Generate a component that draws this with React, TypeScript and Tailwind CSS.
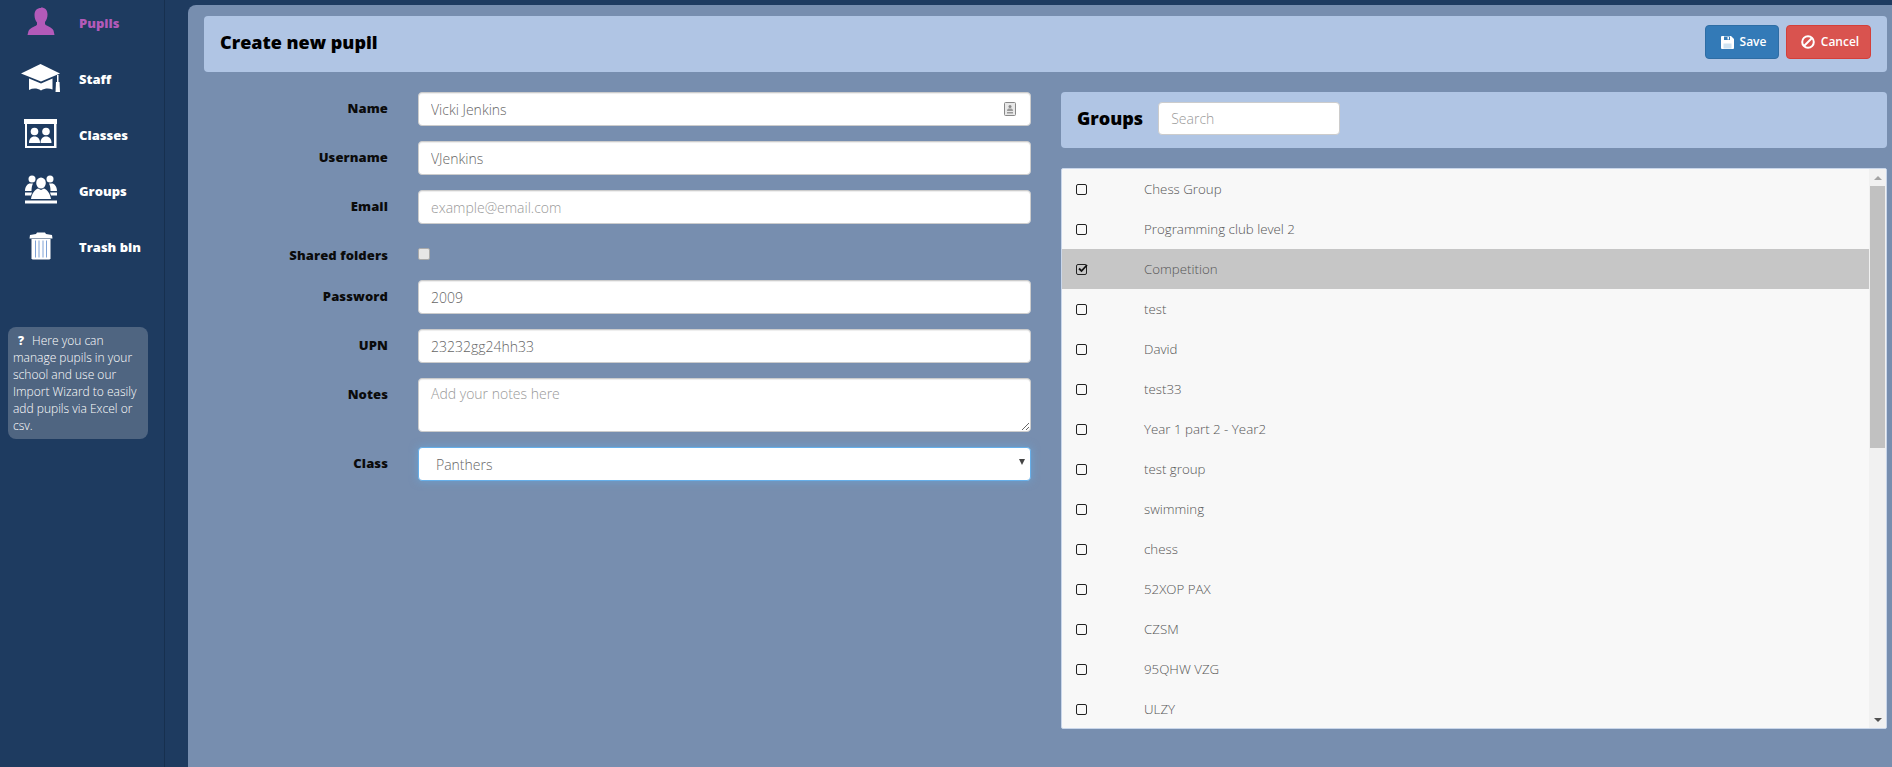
const openSans = "font-['Open_Sans',sans-serif]";

function PupilIcon() {
  return (
    <svg width="28" height="30" viewBox="0 0 28 30" fill="#b35ab9">
      <path d="M14 1c-4 0-6.500 2.500-6.500 7 0 3 1 6 2.500 7.500v2c0 1.500-7 3-8.500 6.500L.5 28h27l-1-4.500c-1.500-3.500-8.500-5-8.500-6.500v-2c1.500-1.500 2.500-4.500 2.500-7.500 0-4.500-2.500-7-6.500-7z" />
    </svg>
  );
}

function StaffIcon() {
  return (
    <svg width="42" height="30" viewBox="0 0 42 30" fill="white">
      <path d="M20.500 1 1 10.500l20 8 19-8z" />
      <path d="M9 15.500v11.500c4-2 8-2 12 0.500 4-2.500 8-2.500 11.500-1V15.500l-11.500 5z" />
      <rect x="37" y="12" width="1.500" height="7" />
      <path d="M36 19h3.500l.5 10h-4.500z" />
    </svg>
  );
}

function ClassesIcon() {
  return (
    <svg width="34" height="29" viewBox="0 0 34 29" fill="white">
      <rect x="0" y="0" width="33" height="5" />
      <path d="M1 5h2v24H1zM30 5h2.500v24H1v-2h29z" />
      <circle cx="10.500" cy="12.500" r="3.800" />
      <path d="M5 24c0-4 2-6.500 5.500-6.500S16 20 16 24z" />
      <circle cx="22" cy="12.500" r="3.800" />
      <path d="M16.500 24c0-4 2-6.500 5.500-6.500s5.500 2.500 5.500 6.500z" />
    </svg>
  );
}

function GroupsIcon() {
  return (
    <svg width="32" height="29" viewBox="0 0 32 29" fill="white">
      <circle cx="7" cy="4" r="3.500" />
      <circle cx="25" cy="4" r="3.500" />
      <path d="M0 16c0-5 3-7.500 5-7.500h3c-1 2-1.500 4-1.500 7.500zM32 16c0-5-3-7.500-5-7.500h-3c1 2 1.500 4 1.500 7.500zM0 17.500h7L6 20.500H0zM32 17.500h-7l1 3h6z" />
      <ellipse cx="16" cy="8" rx="4.800" ry="5.500" />
      <path d="M6 24c1-6 4-9.500 7-10.500l3 1.500 3-1.500c3 1 6 4.500 7 10.500z" />
      <rect x="0" y="25.500" width="32" height="3" />
    </svg>
  );
}

function TrashIcon() {
  return (
    <svg width="26" height="29" viewBox="0 0 26 29">
      <path d="M9 1.500h8l1 1.500 6 1 .5 3.500H1.500L2 4l6-1z" fill="white" />
      <path d="M3.500 8h19v19.500l-1 1h-17l-1-1z" fill="white" />
      <path d="M7.500 9.500v17M11 9.500v17M15 9.500v17M18.500 9.500v17" stroke="#7ea2d6" strokeWidth="1" />
    </svg>
  );
}

function FloppyIcon() {
  return (
    <svg width="13" height="13" viewBox="0 0 13 13">
      <path d="M0 1a1 1 0 0 1 1-1h9l3 3v9a1 1 0 0 1-1 1H1a1 1 0 0 1-1-1z" fill="white" />
      <rect x="3" y="0.500" width="6" height="3.500" fill="#337ab7" />
      <rect x="6.500" y="1" width="1.500" height="2.500" fill="white" />
      <rect x="2.500" y="7.500" width="8" height="5" fill="#cfe3f2" />
    </svg>
  );
}

function BanIcon() {
  return (
    <svg width="14" height="14" viewBox="0 0 14 14" fill="none" stroke="white" strokeWidth="2">
      <circle cx="7" cy="7" r="5.800" />
      <path d="M3 11 11 3" />
    </svg>
  );
}

const navItems = [
  { label: "Pupils", icon: PupilIcon, active: true },
  { label: "Staff", icon: StaffIcon, active: false },
  { label: "Classes", icon: ClassesIcon, active: false },
  { label: "Groups", icon: GroupsIcon, active: false },
  { label: "Trash bin", icon: TrashIcon, active: false },
];

const groups = [
  "Chess Group",
  "Programming club level 2",
  "Competition",
  "test",
  "David",
  "test33",
  "Year 1 part 2 - Year2",
  "test group",
  "swimming",
  "chess",
  "52XOP PAX",
  "CZSM",
  "95QHW VZG",
  "ULZY",
];

function Sidebar() {
  return (
    <aside className="w-[165px] shrink-0 border-r border-[#17304f]">
      <nav className="-mt-[4px] flex flex-col">
        {navItems.map((item) => (
          <div key={item.label} className="flex h-[56px] items-center">
            <div className="flex w-[79px] shrink-0 justify-center pb-[5px] pl-[3px]">
              <item.icon />
            </div>
            <span
              className={`text-[13px] font-extrabold ${item.active ? "text-[#b35ab9]" : "text-white"}`}
            >
              {item.label}
            </span>
          </div>
        ))}
      </nav>
      <div className="ml-[8px] mt-[51px] h-[112px] w-[140px] rounded-lg bg-[#4f6581] px-[5px] py-[5px] text-[12px] font-light leading-[17px] text-white">
        <span className="ml-[5px] mr-[8px] font-extrabold">?</span>
        <span>Here you can</span>{" "}
        <span>manage pupils in your school and use our Import Wizard to easily add pupils via Excel or csv.</span>
      </div>
    </aside>
  );
}

const labelClass =
  "w-[184px] shrink-0 pt-[7px] text-right text-[13px] font-extrabold leading-[18px] tracking-[0.1px] text-[#0b0b0b]";

function Field({ label, children }: { label: string; children: React.ReactNode }) {
  return (
    <div className="flex items-start">
      <label className={labelClass}>{label}</label>
      <div className="ml-[30px] flex-1">{children}</div>
    </div>
  );
}

const inputClass =
  "block h-[34px] w-full rounded border border-[#ccc] bg-white px-[12px] text-[14px] font-light text-[#666] shadow-[inset_0_1px_1px_rgba(0,0,0,0.075)] outline-none placeholder:text-[#999]";

function PupilForm() {
  return (
    <div className="w-[827px] shrink-0 pt-[20px]">
      <div className="flex flex-col gap-[15px]">
        <Field label="Name">
          <div className="relative">
            <input className={inputClass} defaultValue="Vicki Jenkins" />
            <svg className="absolute right-[15px] top-[10px]" width="12" height="14" viewBox="0 0 12 14">
              <rect x="0.500" y="0.500" width="11" height="13" rx="1" fill="#e8e8e8" stroke="#888" />
              <circle cx="6" cy="4.500" r="1.500" fill="#888" />
              <path d="M3 9c0-2 1-2.500 3-2.500S9 7 9 9zM3 10h6v1.500H3z" fill="#999" />
            </svg>
          </div>
        </Field>
        <Field label="Username">
          <input className={inputClass} defaultValue="VJenkins" />
        </Field>
        <Field label="Email">
          <input className={inputClass} placeholder="example@email.com" />
        </Field>
        <div className="flex h-[26px] items-start">
          <label className={labelClass}>Shared folders</label>
          <div className="ml-[30px] mt-[9px] h-[12px] w-[12px] rounded-[2px] border border-[#aaa] bg-[#e6e6e6]" />
        </div>
        <Field label="Password">
          <input className={inputClass} defaultValue="2009" />
        </Field>
        <Field label="UPN">
          <input className={inputClass} defaultValue="23232gg24hh33" />
        </Field>
        <Field label="Notes">
          <textarea className={`${inputClass} h-[54px] resize-y py-[5px] leading-[20px]`} placeholder="Add your notes here" />
        </Field>
        <Field label="Class">
          <div className="relative flex h-[34px] items-center rounded border border-[#66afe9] bg-white pl-[17px] text-[14px] font-light text-[#666] shadow-[0_0_8px_rgba(102,175,233,0.6)]">
            Panthers
            <span className="absolute right-[5px] top-[11px] h-0 w-0 border-x-[3.500px] border-t-[6px] border-x-transparent border-t-[#444]" />
          </div>
        </Field>
      </div>
    </div>
  );
}

function GroupsPanel() {
  return (
    <div className="ml-[30px] flex-1 pt-[20px]">
      <div className="flex h-[56px] items-center rounded bg-[#b0c5e4] pb-[4px] pl-[16px]">
        <h2 className="text-[18px] font-extrabold text-black">Groups</h2>
        <input
          placeholder="Search"
          className="ml-[15px] h-[33px] w-[182px] rounded border border-[#ccc] bg-white px-[12px] text-[14px] font-light outline-none placeholder:text-[#999]"
        />
      </div>
      <div className="mt-[20px] flex h-[561px] overflow-hidden rounded-[2px] border border-[#c9d6ea] bg-[#f8f8f8]">
        <ul className="min-w-0 flex-1">
          {groups.map((name) => {
            const selected = name === "Competition";
            return (
              <li
                key={name}
                className={`flex h-[40px] items-center text-[13.3px] font-light text-[#555] ${selected ? "bg-[#c6c6c6]" : ""}`}
              >
                <span className="ml-[14px] flex h-[11px] w-[11px] shrink-0 items-center justify-center rounded-[2px] border border-[#222]">
                  {selected && (
                    <svg width="11" height="10" viewBox="0 0 11 10" className="-mt-[1px] ml-[1px] shrink-0">
                      <path d="M2 4.500 4.500 7 10 1" fill="none" stroke="#111" strokeWidth="1.800" />
                    </svg>
                  )}
                </span>
                <span className="ml-[57px] pt-[2px]">{name}</span>
              </li>
            );
          })}
        </ul>
        <div className="flex w-[17px] shrink-0 flex-col items-center bg-[#f1f1f1]">
          <div className="flex h-[17px] w-full items-center justify-center">
            <span className="h-0 w-0 border-x-[4px] border-b-[4px] border-x-transparent border-b-[#a3a3a3]" />
          </div>
          <div className="h-[262px] w-[15px] bg-[#c1c1c1]" />
          <div className="flex-1" />
          <div className="flex h-[17px] w-full items-center justify-center">
            <span className="h-0 w-0 border-x-[4px] border-t-[4px] border-x-transparent border-t-[#505050]" />
          </div>
        </div>
      </div>
    </div>
  );
}

export default function App() {
  return (
    <div className={`flex h-[767px] w-[1892px] overflow-hidden bg-[#1e3b60] ${openSans}`}>
      <Sidebar />
      <main className="ml-[23px] mt-[5px] flex-1 rounded-tl-lg bg-[#778eaf] pl-[16px] pr-[5px] pt-[11px]">
        <header className="flex h-[56px] items-center justify-between rounded bg-[#b0c5e4] pb-[4px] pl-[16px] pr-[16px]">
          <h1 className="text-[18px] font-extrabold text-black">Create new pupil</h1>
          <div className="flex gap-[7px]">
            <button className="flex h-[34px] w-[74px] items-center justify-center gap-[6px] rounded border border-[#2e6da4] bg-[#337ab7] pl-[3px] text-[12px] font-semibold text-white">
              <FloppyIcon />
              Save
            </button>
            <button className="flex h-[34px] w-[85px] items-center justify-center gap-[6px] rounded border border-[#d43f3a] bg-[#d9534f] pl-[3px] text-[12px] font-semibold text-white">
              <BanIcon />
              Cancel
            </button>
          </div>
        </header>
        <div className="flex">
          <PupilForm />
          <GroupsPanel />
        </div>
      </main>
    </div>
  );
}
